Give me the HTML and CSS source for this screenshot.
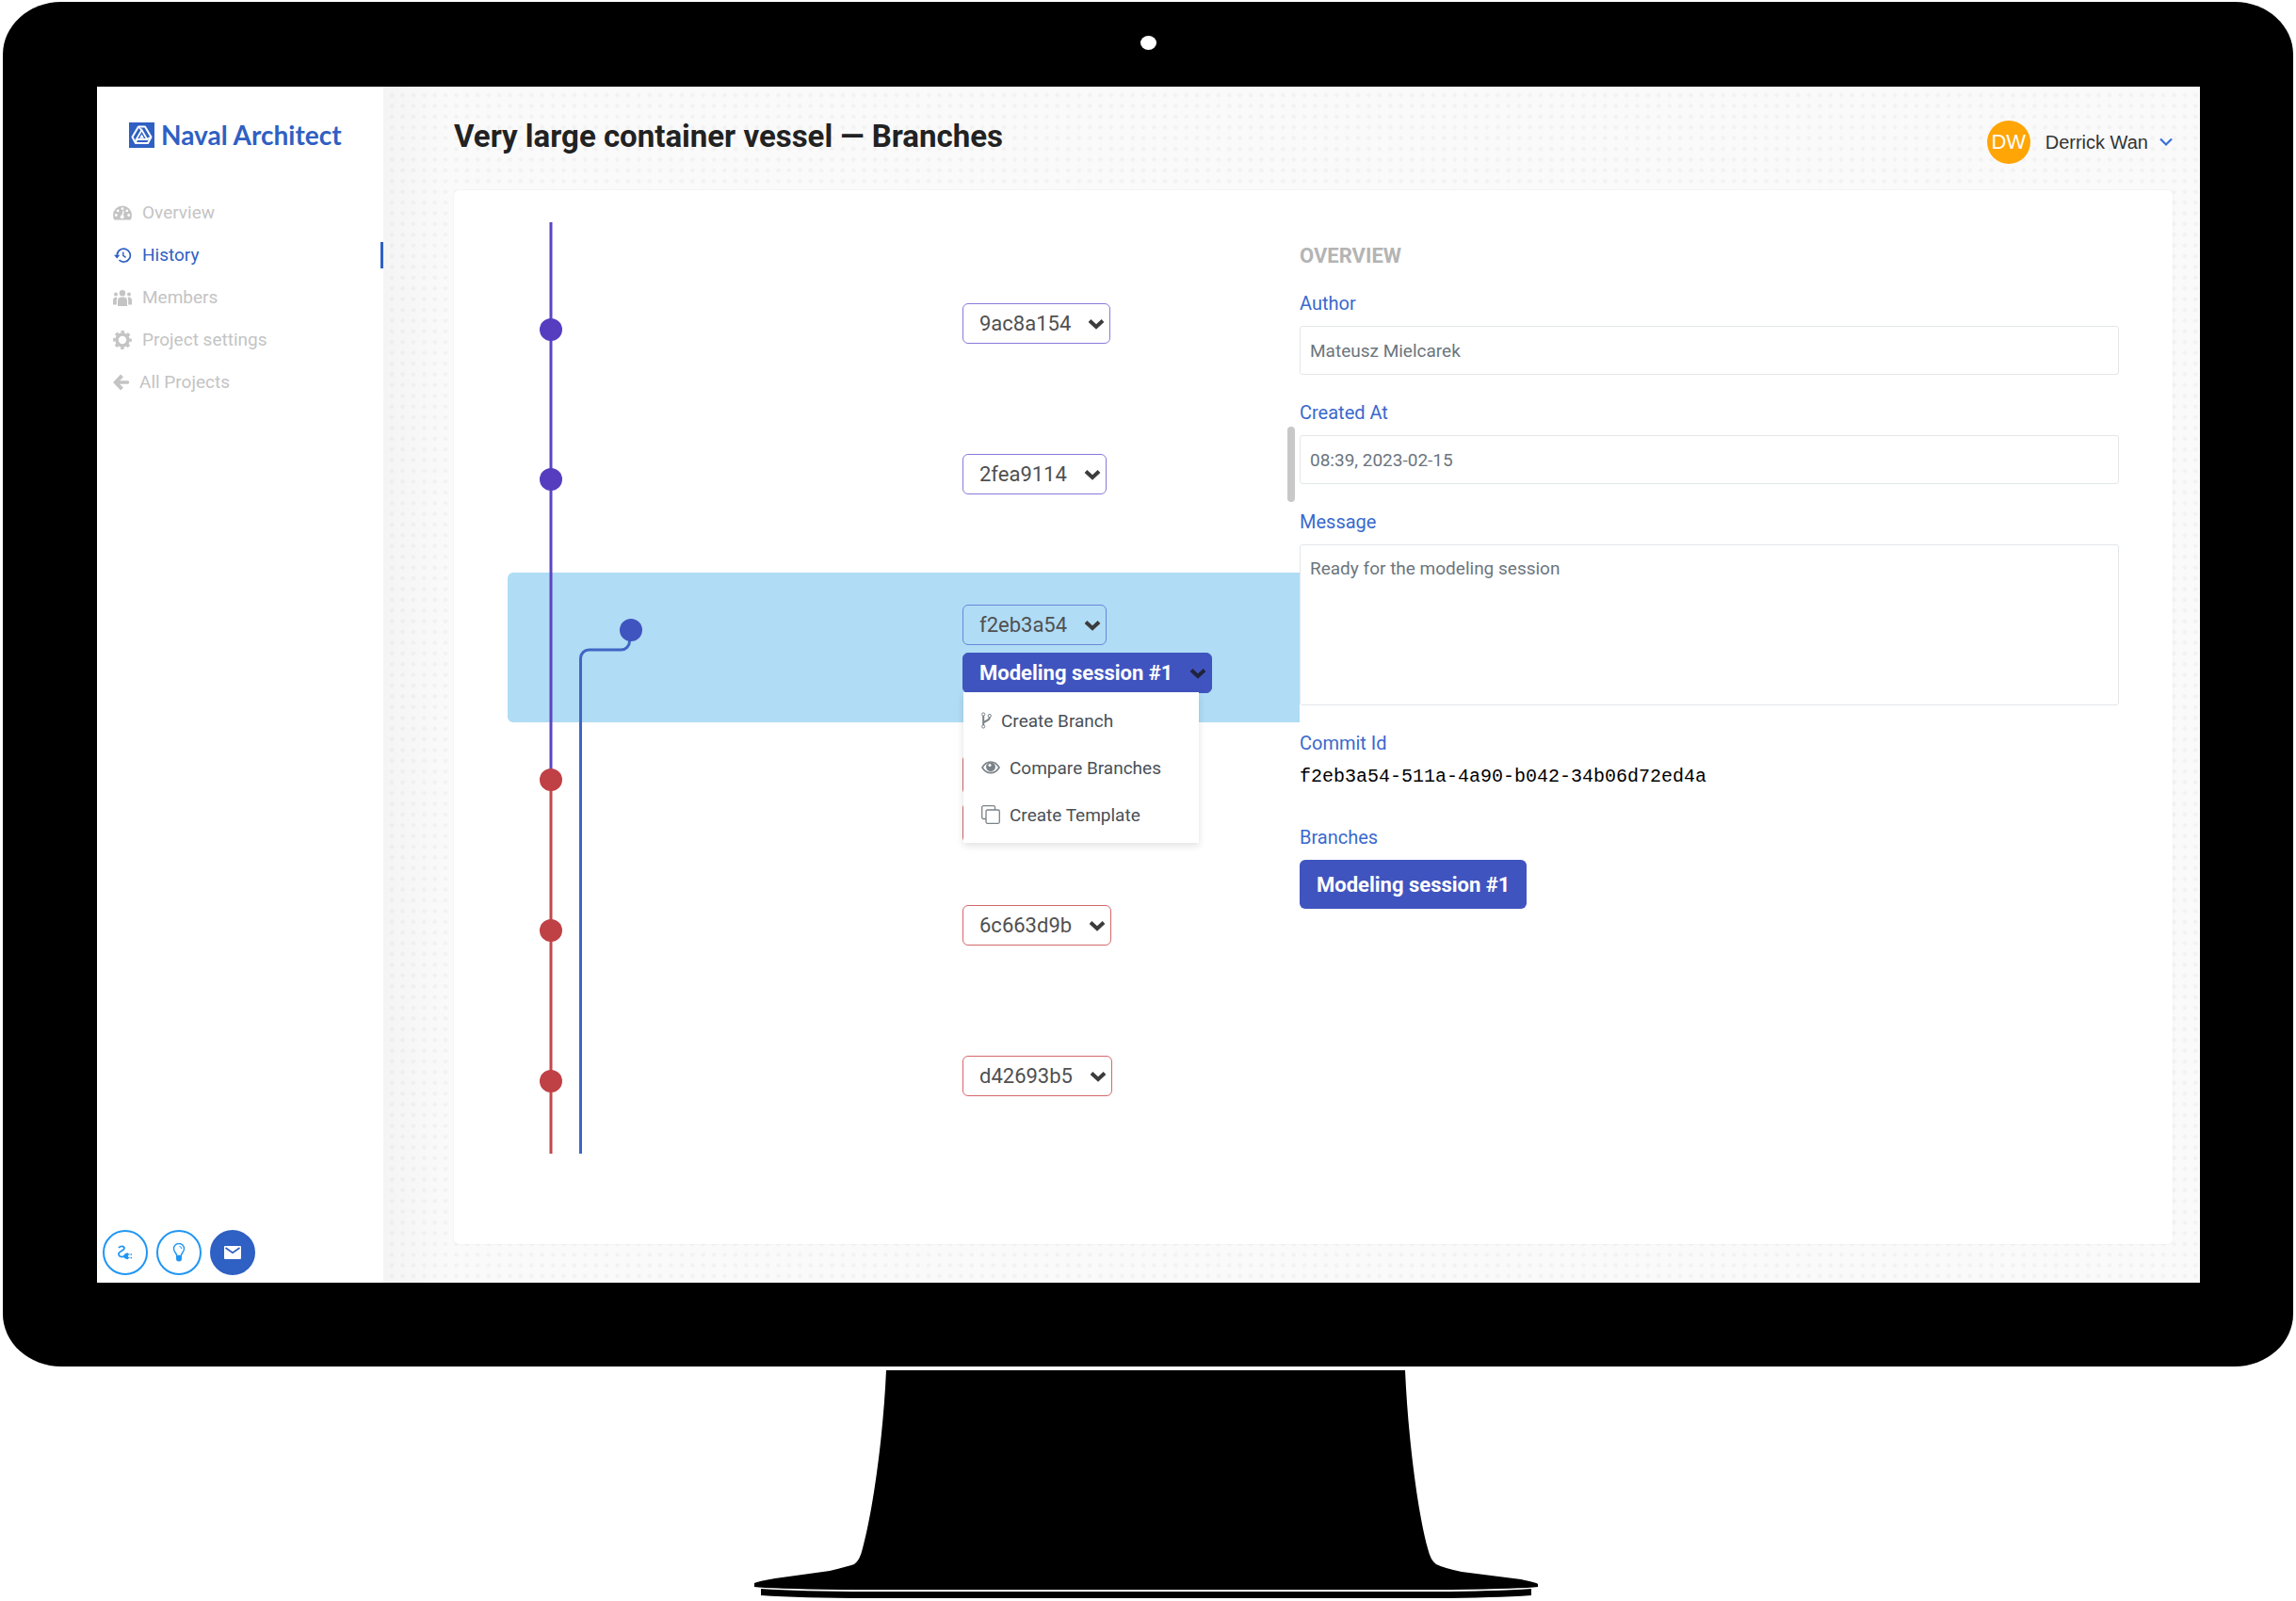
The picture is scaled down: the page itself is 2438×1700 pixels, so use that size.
FILE: index.html
```html
<!DOCTYPE html>
<html lang="en">
<head>
  <meta charset="UTF-8">
  <title>Naval Architect - Branches</title>
  <link rel="stylesheet" href="styles.css">
</head>

<body>

<div class="monitor">
  <span class="camera"></span>
  <div class="screen">

    <aside class="sidebar">
      <a href="#" class="logo">
        <svg width="27" height="27" viewBox="0 0 27 27">
          <rect width="27" height="27" fill="#2f60c3"/>
          <path d="M10 4.500h7l6.500 11-3.500 6.500H7l-3.500-6.500z" fill="none" stroke="#fff" stroke-width="2" stroke-linejoin="round"/>
          <path d="M13.500 8l5.800 10H7.700z" fill="none" stroke="#fff" stroke-width="1.800"/>
          <path d="M10 4.500l3.500 4M23.500 15.500l-5 2.500M7 22l1.500-4" stroke="#fff" stroke-width="1.500"/>
          <path d="M13.500 12.500l2.500 4.200h-5z" fill="#fff"/>
        </svg>
        <span>Naval Architect</span>
      </a>

      <nav class="menu">
        <a href="#" class="menu-item">
          <svg width="20" height="20" viewBox="0 0 20 20">
            <path fill="currentColor" d="M10 2.500a10 10 0 0 0-10 10c0 1.900.4 3.500 1.200 5h17.600c.8-1.500 1.200-3.100 1.200-5a10 10 0 0 0-10-10z"/>
            <g fill="#fff"><circle cx="3.300" cy="12.500" r="1.400"/><circle cx="5.200" cy="7.800" r="1.400"/><circle cx="10" cy="5.600" r="1.400"/><circle cx="14.800" cy="7.800" r="1.400"/><circle cx="16.700" cy="12.500" r="1.400"/><circle cx="9.700" cy="14.200" r="2"/></g>
            <path d="M9.800 14l1.400-6" stroke="#fff" stroke-width="1.300"/>
          </svg>
          Overview
        </a>
        <a href="#" class="menu-item active">
          <svg width="20" height="20" viewBox="0 0 20 20" fill="none" stroke="currentColor">
            <path d="M4.300 10a7 7 0 1 1 2.200 5.200" stroke-width="1.700"/>
            <path d="M1 9.800h6.400L4.200 13.400z" fill="currentColor" stroke="none"/>
            <path d="M10.800 6.400v4l2.800 2" stroke-width="1.400"/>
          </svg>
          History
        </a>
        <a href="#" class="menu-item">
          <svg width="20" height="20" viewBox="0 0 20 20" fill="currentColor">
            <circle cx="10" cy="5.200" r="3.200"/><circle cx="3" cy="6.500" r="2"/><circle cx="17" cy="6.500" r="2"/>
            <path d="M5 19v-5.500a4 4 0 0 1 4-4h2a4 4 0 0 1 4 4V19z"/>
            <path d="M0 17.500v-5a3 3 0 0 1 4.500-2.500c-.5 1-.7 2-.7 3v4.500zM20 17.500v-5a3 3 0 0 0-4.500-2.500c.5 1 .7 2 .7 3v4.500z"/>
          </svg>
          Members
        </a>
        <a href="#" class="menu-item">
          <svg width="20" height="20" viewBox="0 0 20 20">
            <circle cx="10" cy="10" r="6" fill="none" stroke="currentColor" stroke-width="3.600"/>
            <circle cx="10" cy="10" r="8.600" fill="none" stroke="currentColor" stroke-width="2.600" stroke-dasharray="3.500 3.254" stroke-dashoffset="1.750"/>
          </svg>
          Project settings
        </a>
        <a href="#" class="menu-item">
          <svg width="17" height="20" viewBox="0 0 17 20" fill="none" stroke="currentColor" stroke-width="4">
            <path d="M9.500 2.800L2.800 10l6.700 7.200"/><path d="M3.500 10h12" stroke-linecap="round" stroke-width="3.500"/>
          </svg>
          All Projects
        </a>
      </nav>

      <div class="help">
        <button class="round" aria-label="Integrations">
          <svg width="18" height="18" viewBox="0 0 18 18" fill="none" stroke="currentColor">
            <path d="M2 4C4 1.500 8 2 8 4.500S2 7.500 2 10.500s3 3.500 6 2.500" stroke-width="1.800"/>
            <path d="M7 12.500c1-2.500 3-3.200 5-3.200v7c-2 0-4-.8-5-3z" fill="currentColor" stroke="none"/>
            <path d="M12 11h4M12 14.500h4" stroke-width="1.400" stroke-dasharray="1.500 1"/>
          </svg>
        </button>
        <button class="round" aria-label="Tips">
          <svg width="18" height="20" viewBox="0 0 18 20" fill="none" stroke="currentColor">
            <path d="M6.500 13c0-2.500-3-3.700-3-7a5.500 5.500 0 0 1 11 0c0 3.300-3 4.500-3 7" stroke-width="1.400"/>
            <path d="M6 12.800h6v3.700a3 3 0 0 1-6 0z" fill="currentColor" stroke="none"/>
            <path d="M9.500 3.500a2.500 2.500 0 0 1 2.300 2.500"/>
          </svg>
        </button>
        <button class="round mail" aria-label="Contact">
          <svg width="18" height="14" viewBox="0 0 18 14">
            <rect width="18" height="14" rx="1" fill="#fff"/>
            <path d="M1.500 2L9 7.200 16.500 2" fill="none" stroke="#2f60c3" stroke-width="1.700"/>
          </svg>
        </button>
      </div>
    </aside>

    <main class="main">
      <header class="header">
        <h1>Very large container vessel — Branches</h1>
        <button class="user">
          <span class="avatar">DW</span>
          <span>Derrick Wan</span>
          <svg width="14" height="10" viewBox="0 0 14 10"><path d="M1 1.500l6 6 6-6" fill="none" stroke="#3a6fd8" stroke-width="2.200"/></svg>
        </button>
      </header>

      <section class="card">
        <div class="graph">
          <ol class="commits">
            <li class="commit purple">
              <button class="chip">9ac8a154 <svg class="chevron" viewBox="0 0 18 12"><path d="M2 2.500l7 6.500 7-6.500"/></svg></button>
            </li>
            <li class="commit purple">
              <button class="chip">2fea9114 <svg class="chevron" viewBox="0 0 18 12"><path d="M2 2.500l7 6.500 7-6.500"/></svg></button>
            </li>
            <li class="commit blue selected">
              <button class="chip">f2eb3a54 <svg class="chevron" viewBox="0 0 18 12"><path d="M2 2.500l7 6.500 7-6.500"/></svg></button>
              <div class="dropdown">
                <button class="chip branch" aria-expanded="true">Modeling session #1 <svg class="chevron" viewBox="0 0 18 12"><path d="M2 2.500l7 6.500 7-6.500"/></svg></button>
                <div class="dropdown-menu">
                  <button>
                    <svg width="11" height="18" viewBox="0 0 11 18" fill="none" stroke="currentColor">
                      <circle cx="2.200" cy="2.500" r="1.600"/><circle cx="2.200" cy="15.500" r="1.600"/><circle cx="8.800" cy="4" r="1.600"/>
                      <path d="M2.200 4v10M2.200 12c0-3 6.600-1.500 6.600-6.500" stroke-width="2"/>
                    </svg>
                    Create Branch
                  </button>
                  <button>
                    <svg width="20" height="16" viewBox="0 0 20 16">
                      <path d="M1 8c4.500-8 13.500-8 18 0-4.500 7.500-13.500 7.500-18 0z" fill="none" stroke="currentColor" stroke-width="1.600"/>
                      <circle cx="10" cy="7.300" r="4.900" fill="currentColor"/><circle cx="9" cy="5.500" r="1.500" fill="#fff"/>
                    </svg>
                    Compare Branches
                  </button>
                  <button>
                    <svg width="20" height="20" viewBox="0 0 20 20" fill="none" stroke="currentColor" stroke-width="1.300">
                      <rect x="5" y="5" width="14.300" height="14.300" rx="1.500"/>
                      <path d="M5 14.500H2.200A1.500 1.500 0 0 1 .7 13V2.200A1.500 1.500 0 0 1 2.200.7H13a1.500 1.500 0 0 1 1.500 1.500V5"/>
                    </svg>
                    Create Template
                  </button>
                </div>
              </div>
            </li>
            <li class="commit red">
              <button class="chip covered" aria-label="Commit"></button>
              <button class="chip covered" aria-label="Branch"></button>
            </li>
            <li class="commit red">
              <button class="chip">6c663d9b <svg class="chevron" viewBox="0 0 18 12"><path d="M2 2.500l7 6.500 7-6.500"/></svg></button>
            </li>
            <li class="commit red">
              <button class="chip">d42693b5 <svg class="chevron" viewBox="0 0 18 12"><path d="M2 2.500l7 6.500 7-6.500"/></svg></button>
            </li>
          </ol>
          <svg class="lines" width="200" height="989" viewBox="0 0 200 989" fill="none" stroke-width="3">
            <path d="M46 0v593" stroke="#5a45c2"/>
            <path d="M46 593v396" stroke="#c2474b"/>
            <path d="M77.500 989V463a9 9 0 0 1 9-9h34a9 9 0 0 0 9-9v-10" stroke="#3f66c4"/>
            <g stroke="none">
              <circle cx="46" cy="114" r="12" fill="#563dbf"/>
              <circle cx="46" cy="273" r="12" fill="#563dbf"/>
              <circle cx="131" cy="433" r="12" fill="#4054bf"/>
              <circle cx="46" cy="592" r="12" fill="#bf4045"/>
              <circle cx="46" cy="752" r="12" fill="#bf4045"/>
              <circle cx="46" cy="912" r="12" fill="#bf4045"/>
            </g>
          </svg>
          <span class="scroll-thumb"></span>
        </div>

        <form class="details">
          <h2>OVERVIEW</h2>
          <label for="author">Author</label>
          <input id="author" type="text" value="Mateusz Mielcarek" readonly>
          <label for="created">Created At</label>
          <input id="created" type="text" value="08:39, 2023-02-15" readonly>
          <label for="message">Message</label>
          <textarea id="message" readonly>Ready for the modeling session</textarea>
          <h3>Commit Id</h3>
          <code>f2eb3a54-511a-4a90-b042-34b06d72ed4a</code>
          <h3>Branches</h3>
          <button type="button" class="btn-branch">Modeling session #1</button>
        </form>
      </section>
    </main>

  </div>
</div>

<svg class="stand" width="836" height="246" viewBox="0 0 836 246">
  <path d="M140 1H691C694 70 704 150 715 190Q718 203 724 207Q732 211 751 215L814 223Q832 227 832 228V231Q816 233 740 234H92Q16 233 0 231V227Q4 225 22 222L80 214Q100 209 106 207Q112 203 115 190C126 150 137 70 140 1z"/>
  <path d="M7 233Q50 236 120 236H712Q782 236 825 233V240Q782 243 712 243H120Q50 243 7 240z"/>
</svg>

</body>
</html>
```

FILE: styles.css
```css
* {
  box-sizing: border-box;
}
body {
  margin: 0;
  min-height: 100vh;
  display: flex;
  flex-direction: column;
  background: #fff;
  font-family: Roboto, sans-serif;
  font-size: 19px;
  color: #222;
}
button, input, textarea {
  font: inherit;
}
button {
  cursor: pointer;
}
a {
  text-decoration: none;
}

/* monitor */
.monitor {
  position: relative;
  flex: 1;
  display: flex;
  margin: 2px 3px 3px;
  padding: 90px 99px 89px 100px;
  background: #000;
  border-radius: 62px / 56px;
}
.camera {
  position: absolute;
  top: 36px;
  left: 50%;
  width: 17px;
  height: 15px;
  margin-left: -8px;
  border-radius: 50%;
  background: #fff;
}
.screen {
  flex: 1;
  display: flex;
  background: #fff;
}
.stand {
  display: block;
  flex-shrink: 0;
  align-self: center;
}

/* sidebar */
.sidebar {
  width: 304px;
  display: flex;
  flex-direction: column;
}
.logo {
  display: flex;
  align-items: center;
  gap: 7px;
  height: 110px;
  padding: 0 0 8px 34px;
  color: #2f60c3;
  font-family: Lato, sans-serif;
  font-size: 28px;
  font-weight: bold;
}
.menu {
  padding-top: 1px;
}
.menu-item {
  display: flex;
  align-items: center;
  gap: 11px;
  height: 45px;
  padding-left: 17px;
  position: relative;
  color: #c4c4c4;
}
.menu-item.active {
  color: #2f60c3;
}
.menu-item.active::after {
  content: "";
  position: absolute;
  right: 0;
  top: 9px;
  width: 3px;
  height: 28px;
  background: #2f60c3;
}
.help {
  display: flex;
  gap: 9px;
  margin-top: auto;
  padding: 0 0 8px 6px;
}
.round {
  display: flex;
  align-items: center;
  justify-content: center;
  width: 48px;
  height: 48px;
  padding: 0;
  border: 2px solid #2196f3;
  border-radius: 50%;
  background: #fff;
  color: #2196f3;
}
.round.mail {
  background: #2f60c3;
  border-color: #2f60c3;
}

/* main */
.main {
  flex: 1;
  display: flex;
  flex-direction: column;
  padding: 0 29px 41px 75px;
  background-color: #fafafa;
  background-image:
    linear-gradient(to right, rgba(0,0,0,0.025), transparent 70px),
    url("data:image/svg+xml,%3Csvg xmlns='http://www.w3.org/2000/svg' viewBox='0 0 5 5'%3E%3Cpattern id='d' width='1' height='1' patternUnits='userSpaceOnUse'%3E%3Ccircle cx='.8' cy='.8' r='.2' fill='%23f2f2f2'/%3E%3C/pattern%3E%3Crect width='5' height='5' fill='url(%23d)'/%3E%3C/svg%3E");
  background-size: auto, 57px 57px;
}
.header {
  display: flex;
  justify-content: space-between;
  align-items: flex-start;
  height: 110px;
  padding-top: 33px;
}
h1 {
  margin: 0;
  font-size: 33px;
  line-height: 40px;
}
.user {
  display: flex;
  align-items: center;
  gap: 16px;
  margin-top: 3px;
  padding: 0;
  border: none;
  background: none;
  color: #333;
  font-family: "Liberation Sans", sans-serif;
  font-size: 20px;
}
.user svg {
  margin-left: -4px;
}
.avatar {
  width: 46px;
  line-height: 46px;
  border-radius: 50%;
  background: #ffa506;
  color: #fff;
  font-size: 22px;
}
.card {
  flex: 1;
  display: grid;
  grid-template-columns: 58fr 60fr;
  padding: 34px 57px 96px;
  background: #fff;
  border-radius: 5px;
  box-shadow: 0 0 2px rgba(0,0,0,0.08);
}

/* commit graph */
.graph {
  position: relative;
}
.commits {
  margin: 0;
  padding: 52px 0 0;
  list-style: none;
}
.commit {
  display: flex;
  flex-direction: column;
  align-items: flex-start;
  gap: 8px;
  height: 160px;
  padding: 34px 0 0 483px;
  border-radius: 6px 0 0 6px;
}
.commit.selected {
  height: 159px;
  background: #b0dcf5;
}
.commit:last-child {
  height: 138px;
}
.lines {
  position: absolute;
  top: 0;
  left: 0;
}
.chip {
  display: flex;
  align-items: center;
  gap: 18px;
  height: 43px;
  padding: 0 5px 0 17px;
  border: 1px solid;
  border-radius: 6px;
  background: none;
  color: #505050;
  font-size: 22px;
}
.chip.covered {
  width: 157px;
}
.purple .chip {
  border-color: #8a78dc;
}
.blue .chip {
  border-color: #6a86d8;
}
.red .chip {
  border-color: #d5676b;
}
.chevron {
  width: 18px;
  height: 12px;
  fill: none;
  stroke: #3c3c3c;
  stroke-width: 4;
}
.blue .branch {
  background: #4054bf;
  border-color: #4054bf;
  color: #fff;
  font-weight: bold;
}
.branch .chevron {
  stroke: #20243c;
}
.dropdown {
  position: relative;
}
.dropdown-menu {
  position: absolute;
  z-index: 2;
  top: 42px;
  left: 1px;
  width: 250px;
  padding: 5px 0;
  background: #fff;
  box-shadow: 0 3px 8px rgba(0,0,0,0.12);
}
.dropdown-menu button {
  display: flex;
  align-items: center;
  gap: 10px;
  width: 100%;
  height: 50px;
  padding: 0 0 0 19px;
  border: none;
  background: none;
  color: #495057;
}
.dropdown-menu svg {
  color: #7a8288;
}
.scroll-thumb {
  position: absolute;
  top: 217px;
  right: 5px;
  width: 8px;
  height: 80px;
  border-radius: 4px;
  background: #c8c8c8;
}

/* commit details */
.details {
  display: flex;
  flex-direction: column;
  align-items: stretch;
  padding-top: 24px;
}
.details h2 {
  margin: 0 0 26px;
  color: #b4b4b4;
  font-size: 22px;
  line-height: 24px;
}
.details label, .details h3 {
  margin: 0 0 12px;
  color: #3a69cd;
  font-size: 20px;
  font-weight: normal;
  line-height: 24px;
}
.details input, .details textarea {
  height: 52px;
  margin: 0 0 28px;
  padding: 0 10px;
  border: 1px solid #e3e7ea;
  border-radius: 3px;
  background: #fff;
  color: #6c757d;
}
.details textarea {
  height: 171px;
  padding-top: 13px;
  resize: none;
}
.details code {
  margin-bottom: 40px;
  color: #000;
  font-family: "Liberation Mono", monospace;
  font-size: 20px;
  line-height: 24px;
}
.btn-branch {
  align-self: flex-start;
  height: 52px;
  padding: 0 18px;
  border: none;
  border-radius: 6px;
  background: #4054bf;
  color: #fff;
  font-size: 22px;
  font-weight: bold;
}
```
